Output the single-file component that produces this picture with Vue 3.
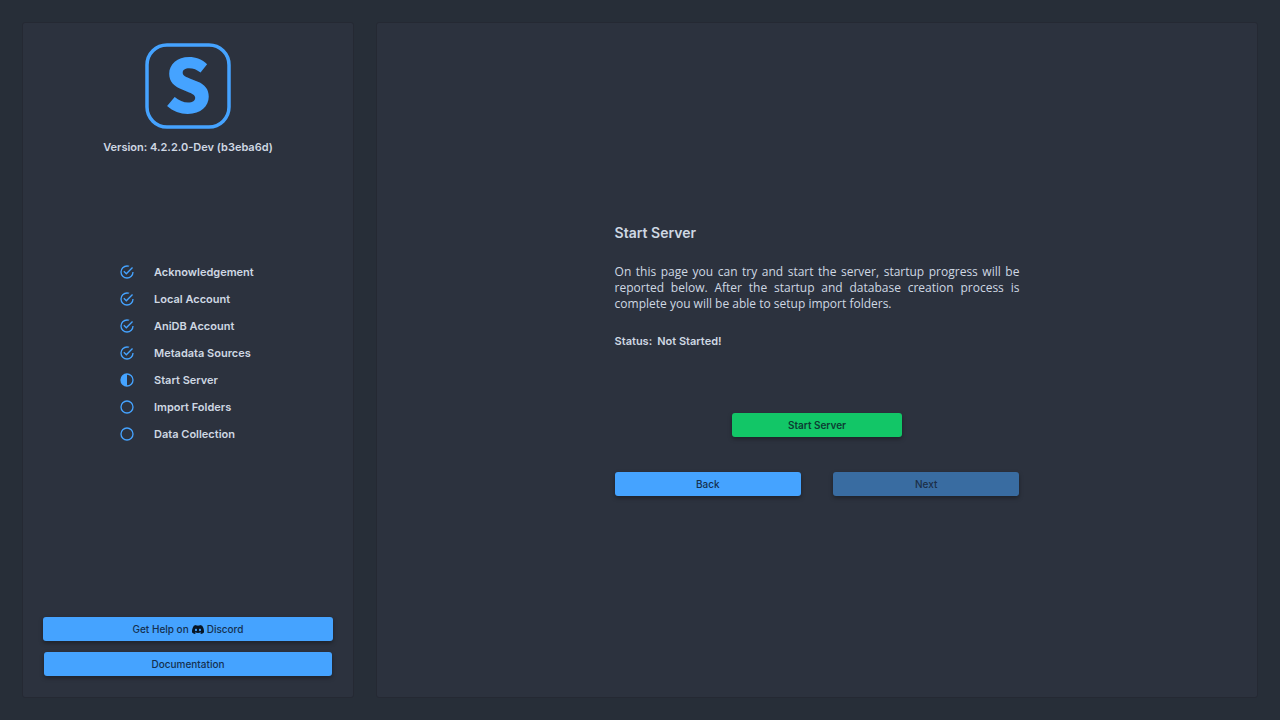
<script setup>
const steps = [
  { label: 'Acknowledgement', state: 'done' },
  { label: 'Local Account', state: 'done' },
  { label: 'AniDB Account', state: 'done' },
  { label: 'Metadata Sources', state: 'done' },
  { label: 'Start Server', state: 'current' },
  { label: 'Import Folders', state: 'pending' },
  { label: 'Data Collection', state: 'pending' },
]
</script>

<template>
  <div class="page">
    <aside class="panel sidebar">
      <header class="brand">
        <svg class="logo" viewBox="0 0 86 86" role="img" aria-label="Logo">
          <rect x="2" y="2" width="82" height="82" rx="20" />
          <text x="43" y="70" text-anchor="middle">S</text>
        </svg>
        <div class="version">Version: 4.2.2.0-Dev (b3eba6d)</div>
      </header>

      <ol class="steps">
        <li v-for="step in steps" :key="step.label">
          <svg class="step-icon" viewBox="0 0 24 24" aria-hidden="true">
            <path
              v-if="step.state === 'done'"
              d="M20 12a8 8 0 1 1-8-8c.76 0 1.5.11 2.2.31l1.57-1.57A9.8 9.8 0 0 0 12 2a10 10 0 1 0 10 10M7.91 10.08 6.5 11.5 11 16 21 6l-1.41-1.42L11 13.17z"
            />
            <path
              v-else-if="step.state === 'current'"
              d="M12 2a10 10 0 1 0 0 20 10 10 0 0 0 0-20m0 2a8 8 0 0 1 0 16z"
              fill-rule="evenodd"
            />
            <path
              v-else
              d="M12 2a10 10 0 1 0 0 20 10 10 0 0 0 0-20m0 2a8 8 0 1 1 0 16 8 8 0 0 1 0-16"
              fill-rule="evenodd"
            />
          </svg>
          <span>{{ step.label }}</span>
        </li>
      </ol>

      <div class="links">
        <button type="button" class="btn">
          Get Help on
          <svg class="discord" viewBox="0 0 24 18" aria-hidden="true">
            <path
              fill-rule="evenodd"
              d="M20.3 1.5A19.8 19.8 0 0 0 15.4 0l-.7 1.3a18 18 0 0 0-5.4 0L8.6 0a19.8 19.8 0 0 0-4.9 1.5C.6 6.1-.3 10.6.1 15a20 20 0 0 0 6 3l1.300-2-1.900-.9.4-.4a14.200 14.200 0 0 0 12.200 0l.4.4-1.900.9 1.300 2a19.900 19.900 0 0 0 6-3c.5-5.200-.8-9.600-3.600-13.500M8 12.300c-1.200 0-2.150-1.100-2.150-2.400S6.800 7.500 8 7.500s2.180 1.100 2.150 2.400c0 1.300-.95 2.400-2.150 2.400m8 0c-1.200 0-2.150-1.100-2.150-2.400S14.800 7.500 16 7.500s2.180 1.100 2.150 2.400c0 1.300-.95 2.400-2.150 2.400"
            />
          </svg>
          Discord
        </button>
        <button type="button" class="btn docs">Documentation</button>
      </div>
    </aside>

    <main class="panel content">
      <section class="form">
        <h1>Start Server</h1>
        <p class="description">
          On this page you can try and start the server, startup progress will be reported below.
          After the startup and database creation process is complete you will be able to setup
          import folders.
        </p>
        <div class="status"><span>Status:</span><span>Not Started!</span></div>
        <button type="button" class="btn start">Start Server</button>
        <div class="nav">
          <button type="button" class="btn">Back</button>
          <button type="button" class="btn" disabled>Next</button>
        </div>
      </section>
    </main>
  </div>
</template>

<style>
body {
  background: #272e38;
}
</style>

<style scoped>
.page {
  box-sizing: border-box;
  display: flex;
  gap: 22px;
  min-height: 100vh;
  padding: 22px;
  color: #cfd8e3;
  font-family: Inter, "Liberation Sans", sans-serif;
  font-size: 11px;
  line-height: 16px;
}

.panel {
  box-sizing: border-box;
  background: #2c323e;
  border: 1px solid #252933;
  border-radius: 3px;
}

.sidebar {
  flex: 0 0 332px;
  display: grid;
  grid-template-rows: 1fr auto 1fr;
  padding: 20px;
}

.brand {
  display: flex;
  flex-direction: column;
  align-items: center;
  gap: 10px;
}

.logo {
  width: 86px;
  height: 86px;
  overflow: visible;
}

.logo rect {
  fill: none;
  stroke: #45a3ff;
  stroke-width: 3.5;
}

.logo text {
  fill: #45a3ff;
  font-family: "Noto Sans CJK SC", "Open Sans", sans-serif;
  font-size: 74px;
  font-weight: 900;
}

.version,
.status {
  font-weight: 600;
}

.steps {
  list-style: none;
  margin: 0;
  padding: 0 0 14px 76px;
  font-weight: 600;
}

.steps li {
  display: flex;
  align-items: center;
  gap: 19px;
  height: 27px;
}

.step-icon {
  width: 16px;
  height: 16px;
  fill: #45a3ff;
}

.links {
  display: flex;
  flex-direction: column;
  justify-content: flex-end;
  gap: 11px;
  padding-bottom: 1px;
}

.btn {
  display: flex;
  align-items: center;
  justify-content: center;
  gap: 3px;
  height: 24px;
  padding: 0;
  border: 0;
  border-radius: 3px;
  background: #45a3ff;
  color: #14304f;
  box-shadow: 0 2px 4px rgba(0, 0, 0, 0.35);
  font: 500 10px/16px Inter, "Liberation Sans", sans-serif;
  cursor: pointer;
}

.btn:disabled {
  background: #396ca1;
  color: #1c2f47;
  cursor: default;
}

.docs {
  margin: 0 1px;
}

.discord {
  width: 12px;
  height: 9px;
  fill: #071524;
}

.content {
  flex: 1;
  display: flex;
  align-items: center;
  justify-content: center;
  padding-bottom: 2px;
}

.form {
  display: flex;
  flex-direction: column;
  width: 46%;
}

h1 {
  margin: 0;
  font-size: 14px;
  line-height: 20px;
  font-weight: 600;
}

.description {
  margin: 21px 0;
  font-family: "Open Sans", "Noto Sans", sans-serif;
  font-size: 12px;
  text-align: justify;
}

.status {
  display: flex;
  gap: 5px;
}

.start {
  align-self: center;
  width: 42%;
  margin: 64px 0 35px;
  background: #12c667;
  color: #0c3d33;
  font-weight: 600;
}

.nav {
  display: grid;
  grid-template-columns: 1fr 1fr;
  gap: 32px;
}
</style>
